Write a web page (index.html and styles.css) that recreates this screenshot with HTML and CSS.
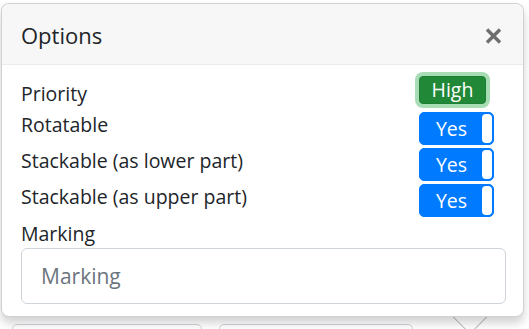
FILE: index.html
```html
<!DOCTYPE html>
<html lang="en">
<head>
    <meta charset="UTF-8">
    <meta name="viewport" content="width=device-width, initial-scale=1.0">
    <title>Options</title>
    <link rel="stylesheet" href="styles.css">
</head>
<body>
    <!-- Trang phía sau popover -->
    <div class="page">
        <div class="page-row">
            <div class="page-box box-a"></div>
            <div class="page-box box-b"></div>
        </div>
    </div>

    <!-- Popover tùy chọn -->
    <div class="popover">
        <div class="popover-header">
            <span class="popover-title">Options</span>
            <button class="close-btn" aria-label="Close">
                <svg width="17" height="16" viewBox="0 0 17 16">
                    <path d="M2 1.5 L15 14.5 M15 1.5 L2 14.5" stroke="#6e6e6e" stroke-width="3.4" stroke-linecap="butt"/>
                </svg>
            </button>
        </div>

        <div class="popover-body">
            <div class="option-row first-row">
                <label class="option-label">Priority</label>
                <button class="priority-btn">High</button>
            </div>
            <div class="option-row">
                <label class="option-label">Rotatable</label>
                <div class="toggle"><span class="toggle-text">Yes</span><span class="toggle-knob"></span></div>
            </div>
            <div class="option-row">
                <label class="option-label">Stackable (as lower part)</label>
                <div class="toggle"><span class="toggle-text">Yes</span><span class="toggle-knob"></span></div>
            </div>
            <div class="option-row">
                <label class="option-label">Stackable (as upper part)</label>
                <div class="toggle"><span class="toggle-text">Yes</span><span class="toggle-knob"></span></div>
            </div>

            <label class="marking-label" for="marking">Marking</label>
            <input type="text" id="marking" class="marking-input" placeholder="Marking">
        </div>

        <div class="popover-arrow"></div>
    </div>
</body>
</html>
```

FILE: styles.css
```css
html {
    background: #fff;
}

body, html {
    margin: 0;
    padding: 0;
    height: 100%;
    width: 100%;
    font-family: 'Open Sans', 'Noto Sans', sans-serif;
    color: #212529;
    overflow: hidden;
}

.page {
    padding-top: 324px;
}

.page-row {
    display: flex;
    gap: 17px;
    padding-left: 12px;
}

.page-box {
    height: 30px;
    border: 1px solid #ced4da;
    border-radius: 5px;
}

.box-a {
    width: 188px;
}

.box-b {
    width: 192px;
}

.popover {
    position: absolute;
    left: 1px;
    top: 3px;
    width: 521px;
    background: #fff;
    border: 1px solid rgba(0, 0, 0, 0.18);
    border-radius: 8px;
    box-shadow: 0 6px 10px rgba(0, 0, 0, 0.18);
}

.popover-header {
    height: 60px;
    display: flex;
    align-items: center;
    justify-content: space-between;
    padding: 0 21px 0 19px;
    background: #f7f7f7;
    border-bottom: 1px solid #ebebeb;
    border-radius: 7px 7px 0 0;
}

.popover-title {
    font-size: 22px;
    margin-top: 1px;
}

.close-btn {
    background: none;
    border: none;
    padding: 0;
    margin-top: 4px;
    display: flex;
}

.popover-body {
    padding: 7px 17px 12px 19px;
}

.option-row {
    display: grid;
    grid-template-columns: 1fr 87px;
    height: 34px;
    margin-bottom: 2px;
}

.first-row {
    height: 38px;
}

.option-label {
    font-size: 19.5px;
    line-height: 26px;
    align-self: start;
}

.first-row .option-label {
    align-self: end;
    margin-bottom: 3px;
}

.priority-btn {
    margin-top: 4px;
    width: 67px;
    height: 28px;
    padding: 0;
    font-family: inherit;
    font-size: 19.5px;
    line-height: 26px;
    color: #fff;
    background: #218838;
    border: 1px solid #1e7e34;
    border-radius: 4px;
    box-shadow: 0 0 0 4px #a8dcb5;
}

.toggle {
    width: 75px;
    height: 33px;
    box-sizing: border-box;
    display: flex;
    align-items: center;
    background: #007bff;
    border: 1px solid #007bff;
    border-radius: 5px;
    padding: 1px;
}

.toggle-text {
    flex: 1;
    text-align: center;
    color: #fff;
    font-size: 19.5px;
    margin-top: -1px;
}

.toggle-knob {
    width: 10px;
    height: 29px;
    background: #fff;
    border-radius: 4px;
}

.marking-label {
    display: block;
    font-size: 19.5px;
    line-height: 28px;
}

.marking-input {
    display: block;
    width: 100%;
    height: 56px;
    box-sizing: border-box;
    padding: 0 19px;
    font-family: inherit;
    font-size: 21px;
    color: #495057;
    border: 1px solid #ced4da;
    border-radius: 6px;
    outline: none;
}

.marking-input::placeholder {
    color: #6c757d;
}

.popover-arrow {
    position: absolute;
    left: 455px;
    bottom: -13px;
    width: 25px;
    height: 25px;
    background: #fff;
    border-right: 1px solid rgba(0, 0, 0, 0.25);
    border-bottom: 1px solid rgba(0, 0, 0, 0.25);
    transform: rotate(45deg);
    z-index: -1;
}
```
